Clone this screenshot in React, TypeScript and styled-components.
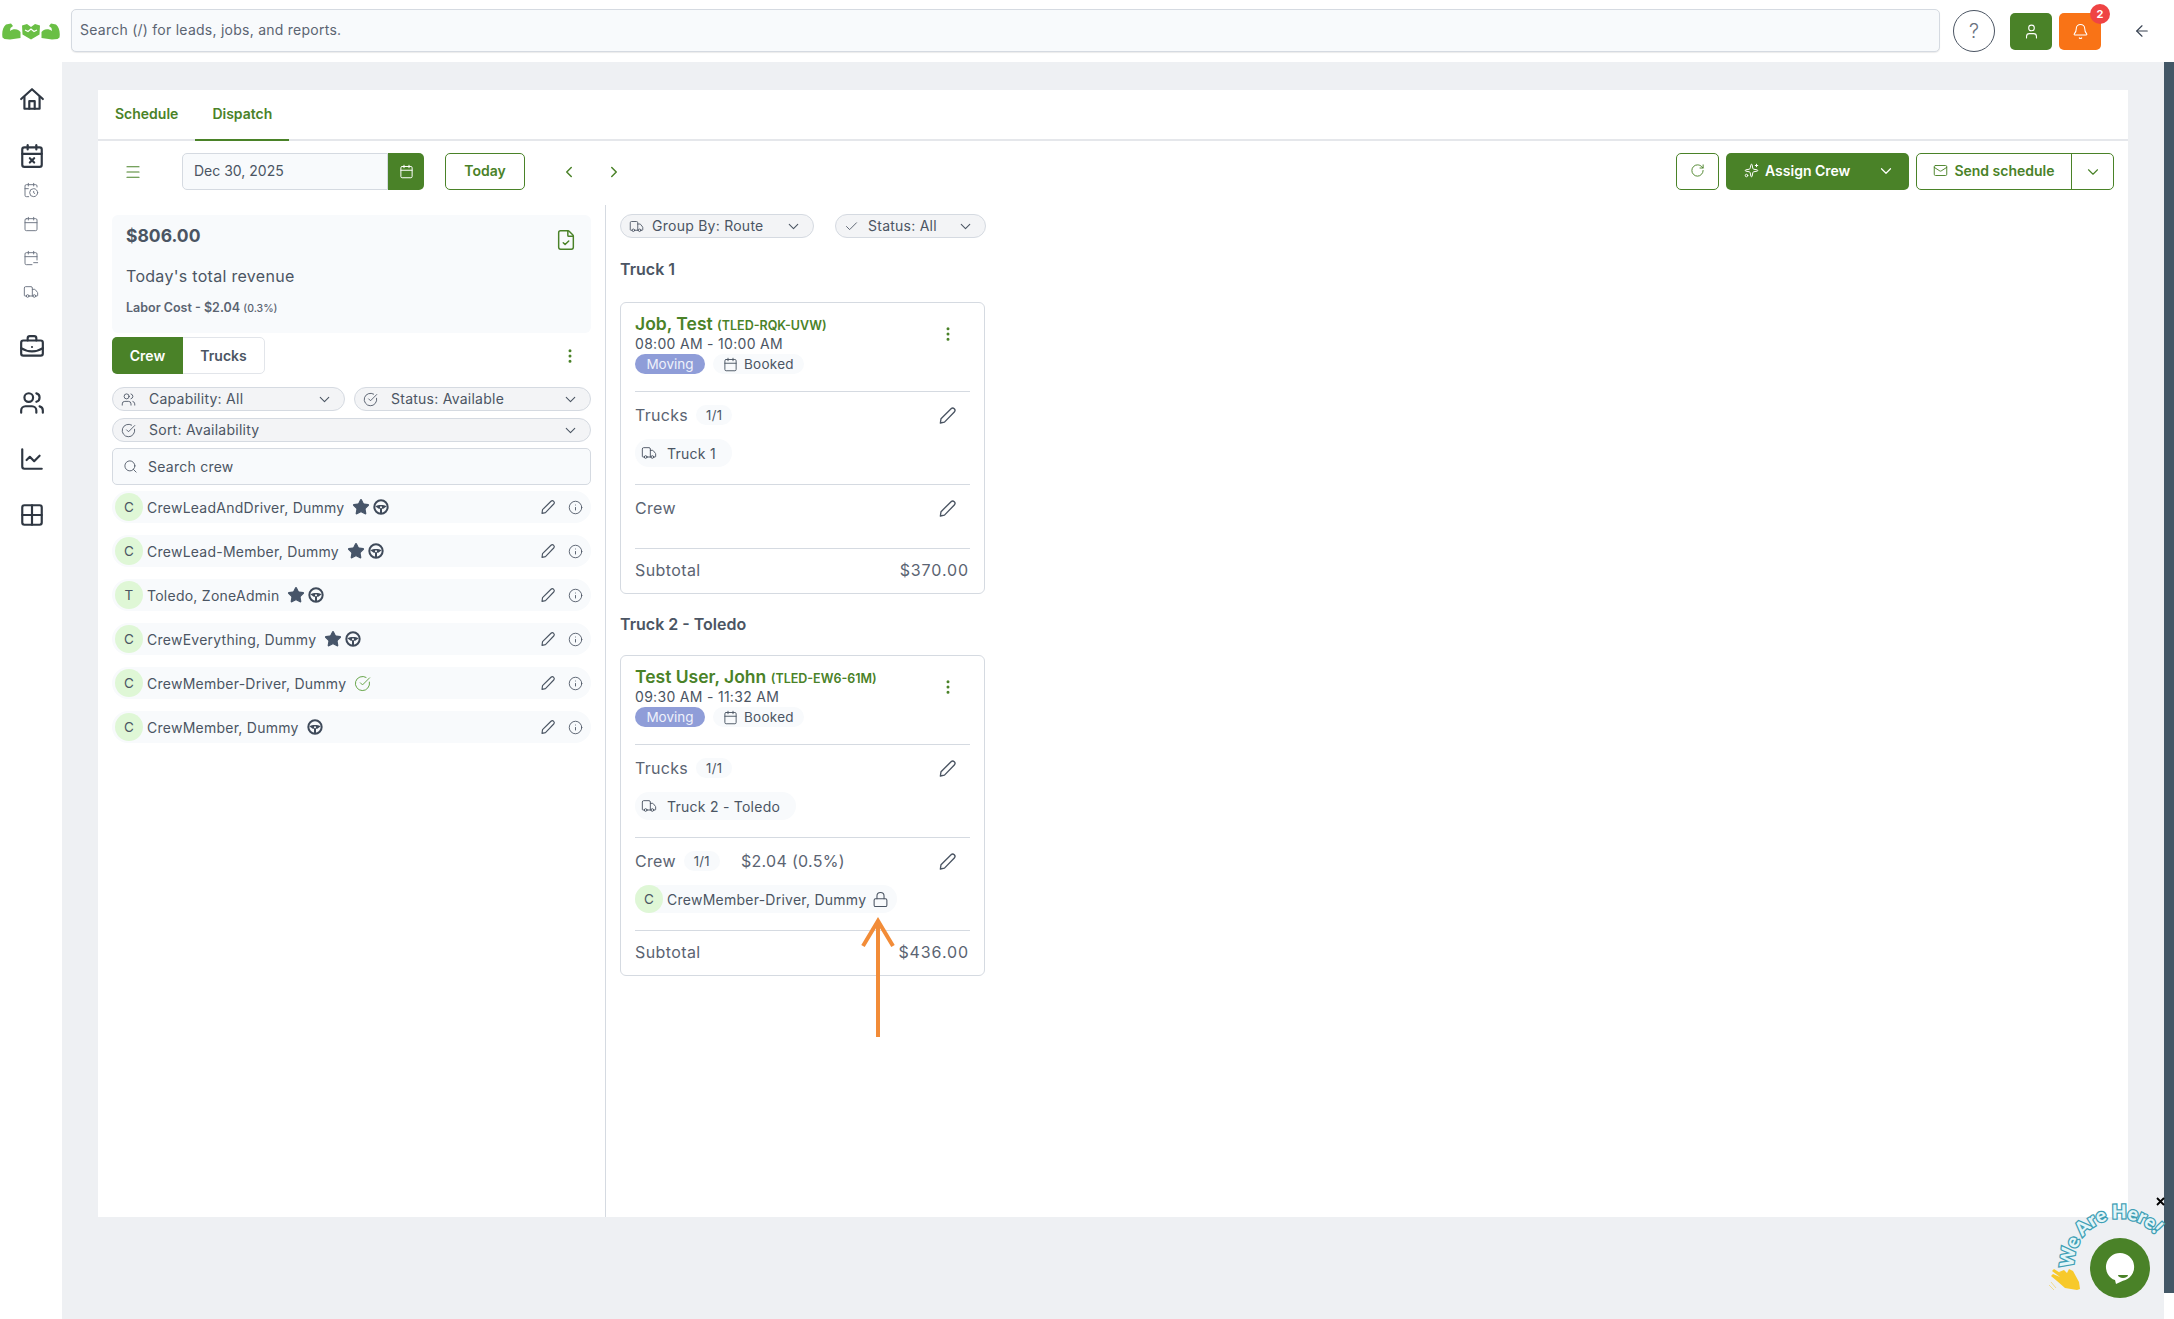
import React from 'react';
import styled, {createGlobalStyle} from 'styled-components';
import {
    ArrowLeft,
    Bell,
    BriefcaseBusiness,
    Calendar,
    CalendarClock,
    CalendarMinus,
    CalendarX,
    Check,
    ChevronDown,
    ChevronLeft,
    ChevronRight,
    CircleCheckBig,
    ChartLine,
    EllipsisVertical,
    FileCheck,
    Grid2x2,
    Info,
    Lock,
    Mail,
    Menu,
    RotateCw,
    Search,
    Sparkles,
    Star,
    Truck,
    User,
    Users,
} from 'lucide-react';

const GREEN = '#4a8228';
const TEXT = '#4b5563';

const GlobalStyle = createGlobalStyle`
    html, body {
        margin: 0;
        padding: 0;
        background: #fff;
    }
    * {
        box-sizing: border-box;
    }
    body {
        font-family: Inter, "Noto Sans", sans-serif;
        color: ${TEXT};
    }
`;

const Page = styled.div`
    position: relative;
    width: 2174px;
    height: 1319px;
    overflow: hidden;
    display: grid;
    grid-template-columns: 62px 1fr;
    grid-template-rows: 62px 1fr;
`;

const TopBar = styled.header`
    grid-column: 1 / 3;
    display: flex;
    align-items: center;
    background: #fff;
`;

const LogoSlot = styled.div`
    width: 71px;
    display: flex;
    padding-left: 2px;
`;

const GlobalSearch = styled.div`
    width: 1869px;
    height: 43px;
    margin-top: -1px;
    display: flex;
    align-items: center;
    padding: 0 0 2px 8px;
    background: #f8fafc;
    border: 1px solid #d5dae1;
    border-radius: 5px;
    box-shadow: 0 1px 1px rgba(0, 0, 0, .08);
    font-size: 14px;
    letter-spacing: .25px;
    color: #5b6472;
`;

const HelpButton = styled.div`
    width: 42px;
    height: 42px;
    margin-left: 13px;
    border-radius: 50%;
    border: 1px solid #4b5563;
    display: flex;
    align-items: center;
    justify-content: center;
    font-size: 20px;
    font-weight: 300;
    color: #6b7280;
`;

const SquareAction = styled.div<{ $color: string }>`
    position: relative;
    width: 42px;
    height: 37px;
    margin-left: ${p => p.$color === GREEN ? '15px' : '7px'};
    border-radius: 5px;
    background: ${p => p.$color};
    color: #fff;
    display: flex;
    align-items: center;
    justify-content: center;
`;

const Badge = styled.span`
    position: absolute;
    top: -9px;
    right: -9px;
    width: 20px;
    height: 20px;
    border-radius: 50%;
    background: #ef4444;
    color: #fff;
    font-size: 11px;
    font-weight: 700;
    display: flex;
    align-items: center;
    justify-content: center;
`;

const BackButton = styled.div`
    margin-left: 32px;
    display: flex;
    color: #374151;
`;

const SideBar = styled.nav`
    background: #fff;
    display: flex;
    flex-direction: column;
    align-items: center;
    padding-top: 24px;
`;

const NavIcon = styled.div<{ $small?: boolean; $gap: number }>`
    display: flex;
    margin-top: ${p => p.$gap}px;
    margin-left: ${p => p.$small ? '0' : '2px'};
    color: ${p => p.$small ? '#6b7280' : '#2f3742'};
`;

const MainRow = styled.div`
    display: flex;
    min-height: 0;
`;

const Main = styled.main`
    flex: 1;
    background: #eef0f3;
    padding: 28px 36px 0;
    display: flex;
    flex-direction: column;
`;

const DarkStrip = styled.div`
    width: 10px;
    height: 1231px;
    background: #435766;
`;

const Panel = styled.section`
    width: 2030px;
    height: 1127px;
    background: #fff;
    display: flex;
    flex-direction: column;
`;

const Tabs = styled.div`
    height: 51px;
    flex: none;
    display: flex;
    border-bottom: 2px solid #e5e7eb;
`;

const Tab = styled.div<{ $active?: boolean }>`
    height: 51px;
    display: flex;
    align-items: center;
    padding: 0 17px 3px;
    color: ${GREEN};
    font-size: 14px;
    font-weight: 600;
    border-bottom: 2px solid ${p => p.$active ? GREEN : 'transparent'};
`;

const Toolbar = styled.div`
    flex: none;
    height: 37px;
    margin-top: 12px;
    display: flex;
    align-items: center;
    padding: 0 14px 0 26px;
    color: ${GREEN};
`;

const DateField = styled.div`
    width: 206px;
    height: 37px;
    margin-left: 40px;
    padding: 0 0 2px 11px;
    display: flex;
    align-items: center;
    background: #f8fafc;
    border: 1px solid #d5dae1;
    border-radius: 5px 0 0 5px;
    font-size: 14px;
    color: ${TEXT};
`;

const DateButton = styled.div`
    width: 36px;
    height: 37px;
    background: ${GREEN};
    color: #fff;
    border-radius: 0 5px 5px 0;
    display: flex;
    align-items: center;
    justify-content: center;
`;

const OutlineButton = styled.div<{ $width: number; $left?: number }>`
    width: ${p => p.$width}px;
    height: 37px;
    padding-bottom: 2px;
    margin-left: ${p => p.$left ?? 0}px;
    border: 1px solid ${GREEN};
    border-radius: 5px;
    background: #fff;
    color: ${GREEN};
    font-size: 14px;
    font-weight: 600;
    display: flex;
    align-items: center;
    justify-content: center;
    gap: 6px;
`;

const PagerIcon = styled.div<{ $left: number }>`
    display: flex;
    margin-left: ${p => p.$left}px;
`;

const Spacer = styled.div`
    flex: 1;
`;

const AssignButton = styled.div`
    width: 183px;
    height: 37px;
    margin-left: 7px;
    padding: 0 14px 2px 18px;
    background: ${GREEN};
    border-radius: 5px;
    color: #fff;
    font-size: 14px;
    font-weight: 600;
    display: flex;
    align-items: center;
    gap: 6px;
`;

const SendGroup = styled.div`
    width: 198px;
    height: 37px;
    margin-left: 7px;
    display: flex;
    border: 1px solid ${GREEN};
    border-radius: 5px;
    color: ${GREEN};
    font-size: 14px;
    font-weight: 600;
`;

const SendLabel = styled.div`
    flex: 1;
    display: flex;
    align-items: center;
    justify-content: center;
    gap: 6px;
    padding-bottom: 2px;
    border-right: 1px solid ${GREEN};
`;

const SendCaret = styled.div`
    width: 41px;
    display: flex;
    align-items: center;
    justify-content: center;
`;

const Columns = styled.div`
    flex: 1;
    min-height: 0;
    margin-top: 15px;
    display: flex;
`;

const CrewColumn = styled.div`
    width: 508px;
    flex: none;
    padding: 10px 14px 0;
    border-right: 1px solid #d5dae1;
    display: flex;
    flex-direction: column;
`;

const RevenueBox = styled.div`
    height: 118px;
    padding: 10px 14px 0;
    background: #f8fafc;
    border-radius: 6px;
    display: flex;
    flex-direction: column;
`;

const RevenueHead = styled.div`
    display: flex;
    justify-content: space-between;
    height: 24px;
    align-items: flex-start;
    color: ${GREEN};
`;

const RevenueAmount = styled.span`
    font-size: 17.5px;
    font-weight: 700;
    color: ${TEXT};
    line-height: 22px;
`;

const RevenueLabel = styled.div`
    margin-top: 17px;
    font-size: 16px;
    letter-spacing: .3px;
    line-height: 20px;
`;

const LaborCost = styled.div`
    margin-top: 14px;
    font-size: 12.5px;
    font-weight: 600;
    line-height: 16px;
    color: #5b6472;
    small {
        font-size: 10.5px;
        font-weight: 500;
    }
`;

const SwitchRow = styled.div`
    margin-top: 4px;
    height: 37px;
    flex: none;
    display: flex;
    align-items: center;
`;

const SwitchGroup = styled.div`
    display: flex;
    height: 37px;
    border: 1px solid #e2e5ea;
    border-radius: 5px;
    font-size: 14px;
    font-weight: 600;
`;

const SwitchItem = styled.div<{ $active?: boolean }>`
    width: ${p => p.$active ? '71px' : '81px'};
    margin: -1px 0;
    margin-left: ${p => p.$active ? '-1px' : '0'};
    padding-bottom: 1px;
    display: flex;
    align-items: center;
    justify-content: center;
    border-radius: ${p => p.$active ? '5px 0 0 5px' : '0'};
    background: ${p => p.$active ? GREEN : 'transparent'};
    color: ${p => p.$active ? '#fff' : TEXT};
`;

const MoreDots = styled.div`
    margin-left: auto;
    margin-right: 12px;
    display: flex;
    color: ${GREEN};
`;

const PillRow = styled.div<{ $top: number; $gap?: number }>`
    display: flex;
    gap: ${p => p.$gap ?? 9}px;
    flex: none;
    margin-top: ${p => p.$top}px;
`;

const FilterPill = styled.div<{ $width?: number; $textGap?: number }>`
    ${p => p.$width ? `width: ${p.$width}px;` : ''}
    flex: ${p => p.$width ? 'none' : 1};
    height: 24px;
    padding: 0 11px 2px 8px;
    background: #f3f4f6;
    border: 1px solid #d5dae1;
    border-radius: 12px;
    display: flex;
    align-items: center;
    font-size: 14px;
    letter-spacing: .25px;
    color: ${TEXT};
    svg {
        flex: none;
        margin-top: 2px;
    }
    svg:last-child {
        margin-left: auto;
    }
    span {
        margin-left: ${p => p.$textGap ?? 13}px;
    }
`;

const CrewSearch = styled.div`
    flex: none;
    margin-top: 6px;
    height: 37px;
    padding: 0 0 1px 10px;
    display: flex;
    align-items: center;
    gap: 10px;
    background: #f8fafc;
    border: 1px solid #d5dae1;
    border-radius: 5px;
    font-size: 14px;
    letter-spacing: .25px;
`;

const CrewList = styled.div`
    margin-top: 6px;
    display: flex;
    flex-direction: column;
    gap: 12px;
`;

const CrewRow = styled.div`
    height: 32px;
    padding-left: 3px;
    padding-right: 8px;
    display: flex;
    align-items: center;
    background: #f8fafc;
    border-radius: 16px;
    font-size: 14px;
    letter-spacing: .25px;
`;

const Avatar = styled.span`
    width: 28px;
    height: 28px;
    flex: none;
    border-radius: 50%;
    background: #dff7d6;
    display: flex;
    align-items: center;
    justify-content: center;
    font-size: 13.5px;
`;

const CrewName = styled.span`
    margin-left: 4px;
`;

const Marks = styled.span`
    margin-left: 8px;
    display: flex;
    align-items: center;
    gap: 3px;
    color: #475569;
`;

const RowActions = styled.span`
    margin-left: auto;
    display: flex;
    align-items: center;
    gap: 12px;
`;

const RouteColumn = styled.div`
    flex: 1;
    padding: 9px 0 0 14px;
`;

const RouteTitle = styled.h3<{ $top: number }>`
    margin: ${p => p.$top}px 0 0;
    height: 24px;
    font-size: 16px;
    line-height: 24px;
    font-weight: 600;
    color: ${TEXT};
`;

const JobCard = styled.article<{ $top: number }>`
    width: 365px;
    margin-top: ${p => p.$top}px;
    padding: 0 14px;
    border: 1px solid #d5dae1;
    border-radius: 6px;
    background: #fff;
`;

const JobHead = styled.div`
    position: relative;
    height: 88px;
    padding-top: 11px;
`;

const JobName = styled.div`
    height: 21px;
    line-height: 20px;
    font-size: 17.5px;
    font-weight: 600;
    color: ${GREEN};
    small {
        font-size: 12.5px;
        font-weight: 600;
    }
`;

const JobTime = styled.div`
    height: 18px;
    line-height: 18px;
    font-size: 14px;
    letter-spacing: .3px;
`;

const JobBadges = styled.div`
    margin-top: 1px;
    display: flex;
    gap: 8px;
`;

const KindBadge = styled.span`
    height: 20px;
    width: 70px;
    padding-bottom: 1px;
    border-radius: 10px;
    background: #8f9dd8;
    color: #eef1fb;
    display: flex;
    align-items: center;
    justify-content: center;
    font-size: 13.5px;
`;

const StatusBadge = styled.span`
    height: 20px;
    padding: 0 10px;
    border-radius: 10px;
    background: #f8fafc;
    display: flex;
    align-items: center;
    gap: 6px;
    font-size: 13.5px;
    letter-spacing: .25px;
`;

const CardMenu = styled.div`
    position: absolute;
    top: 22px;
    right: 13px;
    display: flex;
    color: ${GREEN};
`;

const Section = styled.div<{ $empty?: boolean }>`
    border-top: 1px solid #d5dae1;
    padding-top: 10px;
    height: ${p => p.$empty ? '64px' : '93px'};
`;

const SectionHead = styled.div`
    height: 26px;
    display: flex;
    align-items: center;
    font-size: 16px;
    letter-spacing: .3px;
    color: #5b6472;
`;

const Count = styled.span`
    height: 20px;
    margin-left: 8px;
    padding: 0 10px;
    border-radius: 10px;
    background: #f8fafc;
    display: flex;
    align-items: center;
    font-size: 13px;
    color: ${TEXT};
`;

const CrewCost = styled.span`
    margin-left: 21px;
    font-size: 16px;
`;

const EditSlot = styled.span`
    margin-left: auto;
    margin-right: 13px;
    display: flex;
`;

const Chip = styled.div<{ $person?: boolean }>`
    margin-top: 11px;
    width: fit-content;
    height: 28px;
    padding: 0 ${p => p.$person ? '8px' : '16px'} 0 ${p => p.$person ? '0' : '6px'};
    border-radius: 14px;
    background: #f8fafc;
    display: flex;
    align-items: center;
    gap: ${p => p.$person ? '4px' : '10px'};
    font-size: 14px;
    letter-spacing: .25px;
`;

const SubtotalRow = styled.div`
    height: 45px;
    padding: 0 1px 2px 0;
    border-top: 1px solid #d5dae1;
    display: flex;
    align-items: center;
    justify-content: space-between;
    font-size: 16px;
    letter-spacing: .4px;
    color: #5b6472;
`;

const SubtotalAmount = styled.span`
    letter-spacing: .9px;
`;

const Annotation = styled.svg`
    position: absolute;
    left: 858px;
    top: 915px;
`;

const ChatWidget = styled.svg`
    position: absolute;
    left: 2040px;
    top: 1190px;
`;

const GreenLogo = () => (
    <svg width="58" height="18" viewBox="0 0 58 18" fill="#6abf45">
        <path d="M.5 15.5C-.4 10 1 5 4 2.5L9 1.5l2 2.5-2.5 2L8 9c2.5-2 6-2.5 9-.5l1.5 1.5v6L8 17.500 2.500 17z"/>
        <path d="M20 3.500l5-1.500 4 3 4-3 5 1.500-.5 9L29 17.500 20.500 12.500z"/>
        <path d="M57.500 15.500C58.400 10 57 5 54 2.500L49 1.500l-2 2.500 2.500 2L50 9c-2.500-2-6-2.500-9-.5L39.500 10v6l10.500 1.500 5.500-.5z"/>
        <path d="M23 8l3 1.500 3-2.500 3 2.500 3-1.500" fill="none" stroke="#fff" strokeWidth="1.2"/>
    </svg>
);

const HomeIcon = () => (
    <svg width="26" height="26" viewBox="0 0 24 24" fill="none" stroke="currentColor" strokeWidth="2"
         strokeLinejoin="round" strokeLinecap="round">
        <path d="M2 12 12 3l10 9"/>
        <path d="M5 10v11h14V10"/>
        <path d="M9.5 21v-7h5v7"/>
    </svg>
);

const PencilIcon = ({size = 19}: { size?: number }) => (
    <svg width={size} height={size} viewBox="0 0 24 24" fill="none" stroke="#4b5563" strokeWidth="1.7"
         strokeLinejoin="round">
        <path d="M3 21.5l.8-5.5L16.5 3.4a2.9 2.9 0 0 1 4.100 4.100L8.200 20.400z"/>
    </svg>
);

const WheelIcon = () => (
    <svg width="16" height="16" viewBox="0 0 24 24" fill="none" stroke="#3f4a5a">
        <circle cx="12" cy="12" r="10" strokeWidth="3"/>
        <path fill="#3f4a5a" stroke="none" d="M3.500 11C8 8.500 16 8.500 20.500 11L15.500 14.500H8.500z"/>
        <path d="M12 14v7" strokeWidth="3"/>
        <circle cx="12" cy="12.500" r="1.500" fill="#fff" stroke="none"/>
    </svg>
);

const navTop = [
    {icon: <CalendarX size={26} strokeWidth={2}/>, gap: 31},
];

const navSub = [
    {icon: <CalendarClock size={16} strokeWidth={1.4}/>, gap: 13},
    {icon: <Calendar size={16} strokeWidth={1.4}/>, gap: 18},
    {icon: <CalendarMinus size={16} strokeWidth={1.4}/>, gap: 18},
    {icon: <Truck size={16} strokeWidth={1.4}/>, gap: 18},
];

const navBottom = [
    {icon: <BriefcaseBusiness size={26} strokeWidth={2}/>, gap: 34},
    {icon: <Users size={26} strokeWidth={2}/>, gap: 30},
    {icon: <ChartLine size={26} strokeWidth={2}/>, gap: 30},
    {icon: <Grid2x2 size={26} strokeWidth={2}/>, gap: 30},
];

interface CrewMember {
    initial: string;
    name: string;
    star?: boolean;
    wheel?: boolean;
    available?: boolean;
}

const crew: CrewMember[] = [
    {initial: 'C', name: 'CrewLeadAndDriver, Dummy', star: true, wheel: true},
    {initial: 'C', name: 'CrewLead-Member, Dummy', star: true, wheel: true},
    {initial: 'T', name: 'Toledo, ZoneAdmin', star: true, wheel: true},
    {initial: 'C', name: 'CrewEverything, Dummy', star: true, wheel: true},
    {initial: 'C', name: 'CrewMember-Driver, Dummy', available: true},
    {initial: 'C', name: 'CrewMember, Dummy', wheel: true},
];

interface JobProps {
    top: number;
    name: string;
    code: string;
    time: string;
    truck: string;
    subtotal: string;
    assigned?: boolean;
}

const Job = ({top, name, code, time, truck, subtotal, assigned}: JobProps) => <JobCard $top={top}>
    <JobHead>
        <JobName>{name} <small>({code})</small></JobName>
        <JobTime>{time}</JobTime>
        <JobBadges>
            <KindBadge>Moving</KindBadge>
            <StatusBadge><Calendar size={15} strokeWidth={1.5}/>Booked</StatusBadge>
        </JobBadges>
        <CardMenu><EllipsisVertical size={18}/></CardMenu>
    </JobHead>
    <Section>
        <SectionHead>
            Trucks <Count>1/1</Count>
            <EditSlot><PencilIcon/></EditSlot>
        </SectionHead>
        <Chip><Truck size={16} strokeWidth={1.4}/>{truck}</Chip>
    </Section>
    <Section $empty={!assigned}>
        <SectionHead>
            Crew
            {assigned && <Count>1/1</Count>}
            {assigned && <CrewCost>$2.04 (0.5%)</CrewCost>}
            <EditSlot><PencilIcon/></EditSlot>
        </SectionHead>
        {assigned && <Chip $person>
            <Avatar>C</Avatar>
            CrewMember-Driver, Dummy
            <Lock size={17} strokeWidth={1.5} style={{marginLeft: 2}}/>
        </Chip>}
    </Section>
    <SubtotalRow><span>Subtotal</span><SubtotalAmount>{subtotal}</SubtotalAmount></SubtotalRow>
</JobCard>;

export default function App() {
    return <Page>
        <GlobalStyle/>
        <TopBar>
            <LogoSlot><GreenLogo/></LogoSlot>
            <GlobalSearch>Search (/) for leads, jobs, and reports.</GlobalSearch>
            <HelpButton>?</HelpButton>
            <SquareAction $color={GREEN}><User size={17} strokeWidth={1.5}/></SquareAction>
            <SquareAction $color="#f97316">
                <Bell size={17} strokeWidth={1.5}/>
                <Badge>2</Badge>
            </SquareAction>
            <BackButton><ArrowLeft size={18} strokeWidth={1.5}/></BackButton>
        </TopBar>
        <SideBar>
            <NavIcon $gap={0}><HomeIcon/></NavIcon>
            {navTop.map((n, i) => <NavIcon key={i} $gap={n.gap}>{n.icon}</NavIcon>)}
            {navSub.map((n, i) => <NavIcon key={i} $small $gap={n.gap}>{n.icon}</NavIcon>)}
            {navBottom.map((n, i) => <NavIcon key={i} $gap={n.gap}>{n.icon}</NavIcon>)}
        </SideBar>
        <MainRow>
            <Main>
                <Panel>
                    <Tabs>
                        <Tab>Schedule</Tab>
                        <Tab $active>Dispatch</Tab>
                    </Tabs>
                    <Toolbar>
                        <Menu size={18} strokeWidth={1.6}/>
                        <DateField>Dec 30, 2025</DateField>
                        <DateButton><Calendar size={15} strokeWidth={1.6}/></DateButton>
                        <OutlineButton $width={80} $left={21}>Today</OutlineButton>
                        <PagerIcon $left={35}><ChevronLeft size={18}/></PagerIcon>
                        <PagerIcon $left={27}><ChevronRight size={18}/></PagerIcon>
                        <Spacer/>
                        <OutlineButton $width={43}><RotateCw size={15} strokeWidth={1.5}/></OutlineButton>
                        <AssignButton>
                            <Sparkles size={15} strokeWidth={1.6}/>
                            Assign Crew
                            <ChevronDown size={18} strokeWidth={1.6} style={{marginLeft: 'auto'}}/>
                        </AssignButton>
                        <SendGroup>
                            <SendLabel><Mail size={15} strokeWidth={1.5}/>Send schedule</SendLabel>
                            <SendCaret><ChevronDown size={18} strokeWidth={1.5}/></SendCaret>
                        </SendGroup>
                    </Toolbar>
                    <Columns>
                        <CrewColumn>
                            <RevenueBox>
                                <RevenueHead>
                                    <RevenueAmount>$806.00</RevenueAmount>
                                    <FileCheck size={22} strokeWidth={1.6} style={{marginTop: 4}}/>
                                </RevenueHead>
                                <RevenueLabel>Today's total revenue</RevenueLabel>
                                <LaborCost>Labor Cost - $2.04 <small>(0.3%)</small></LaborCost>
                            </RevenueBox>
                            <SwitchRow>
                                <SwitchGroup>
                                    <SwitchItem $active>Crew</SwitchItem>
                                    <SwitchItem>Trucks</SwitchItem>
                                </SwitchGroup>
                                <MoreDots><EllipsisVertical size={18}/></MoreDots>
                            </SwitchRow>
                            <PillRow $top={13}>
                                <FilterPill $width={233}>
                                    <Users size={15} strokeWidth={1.4}/>
                                    <span>Capability: All</span>
                                    <ChevronDown size={17} strokeWidth={1.5}/>
                                </FilterPill>
                                <FilterPill>
                                    <CircleCheckBig size={15} strokeWidth={1.4}/>
                                    <span>Status: Available</span>
                                    <ChevronDown size={17} strokeWidth={1.5}/>
                                </FilterPill>
                            </PillRow>
                            <PillRow $top={7}>
                                <FilterPill>
                                    <CircleCheckBig size={15} strokeWidth={1.4}/>
                                    <span>Sort: Availability</span>
                                    <ChevronDown size={17} strokeWidth={1.5}/>
                                </FilterPill>
                            </PillRow>
                            <CrewSearch>
                                <Search size={15} strokeWidth={1.4}/>
                                Search crew
                            </CrewSearch>
                            <CrewList>
                                {crew.map(member => <CrewRow key={member.name}>
                                    <Avatar>{member.initial}</Avatar>
                                    <CrewName>{member.name}</CrewName>
                                    <Marks>
                                        {member.star && <Star size={18} fill="#475569" strokeWidth={1.5}/>}
                                        {member.wheel && <WheelIcon/>}
                                        {member.available && <CircleCheckBig size={17} strokeWidth={1.3} color="#5a9e3a"/>}
                                    </Marks>
                                    <RowActions>
                                        <PencilIcon size={16}/>
                                        <Info size={15} strokeWidth={1.4}/>
                                    </RowActions>
                                </CrewRow>)}
                            </CrewList>
                        </CrewColumn>
                        <RouteColumn>
                            <PillRow $top={0} $gap={21}>
                                <FilterPill $width={194} $textGap={8}>
                                    <Truck size={15} strokeWidth={1.4}/>
                                    <span>Group By: Route</span>
                                    <ChevronDown size={17} strokeWidth={1.5}/>
                                </FilterPill>
                                <FilterPill $width={151} $textGap={9}>
                                    <Check size={15} strokeWidth={1.4}/>
                                    <span>Status: All</span>
                                    <ChevronDown size={17} strokeWidth={1.5}/>
                                </FilterPill>
                            </PillRow>
                            <RouteTitle $top={19}>Truck 1</RouteTitle>
                            <Job top={21} name="Job, Test" code="TLED-RQK-UVW" time="08:00 AM - 10:00 AM"
                                 truck="Truck 1" subtotal="$370.00"/>
                            <RouteTitle $top={18}>Truck 2 - Toledo</RouteTitle>
                            <Job top={19} name="Test User, John" code="TLED-EW6-61M" time="09:30 AM - 11:32 AM"
                                 truck="Truck 2 - Toledo" subtotal="$436.00" assigned/>
                        </RouteColumn>
                    </Columns>
                </Panel>
            </Main>
            <DarkStrip/>
        </MainRow>
        <Annotation width="40" height="125" viewBox="0 0 40 125" fill="none" stroke="#f28c38" strokeWidth="4">
            <path d="M20 122V8"/>
            <path d="M5 31 20 6 35 31"/>
        </Annotation>
        <ChatWidget width="134" height="122" viewBox="0 0 134 122">
            <path id="chat-arc" d="M34 78A46 46 0 0 1 122 56" fill="none"/>
            <text fontFamily="Lato, sans-serif" fontWeight="900" fontSize="19" fill="#e3f5f8" stroke="#3f9fb5"
                  strokeWidth="2.6" paintOrder="stroke">
                <textPath href="#chat-arc">We Are Here!</textPath>
            </text>
            <path fill="#f7c92b" d="M19 82l5-2 3 3 2-4 4 2 6 11 1 7-3 1-12-2-8-7-6-5 2-2 7 3-8-6 2-2 8 5z"/>
            <path stroke="#f0dc90" strokeWidth="1" fill="none" d="M11 92l5 6M9 95l5 5"/>
            <circle cx="80" cy="78" r="30" fill={GREEN}/>
            <path fill="#fff" d="M80 63a14 14 0 0 1 3 27.7L76 94l-1-3.900A14 14 0 0 1 80 63z"/>
            <path fill={GREEN} d="M78 85h10a5 3 0 0 1-10 0z"/>
            <path stroke="#000" strokeWidth="1.8" d="M117 8l7 7M124 8l-7 7"/>
        </ChatWidget>
    </Page>;
}
